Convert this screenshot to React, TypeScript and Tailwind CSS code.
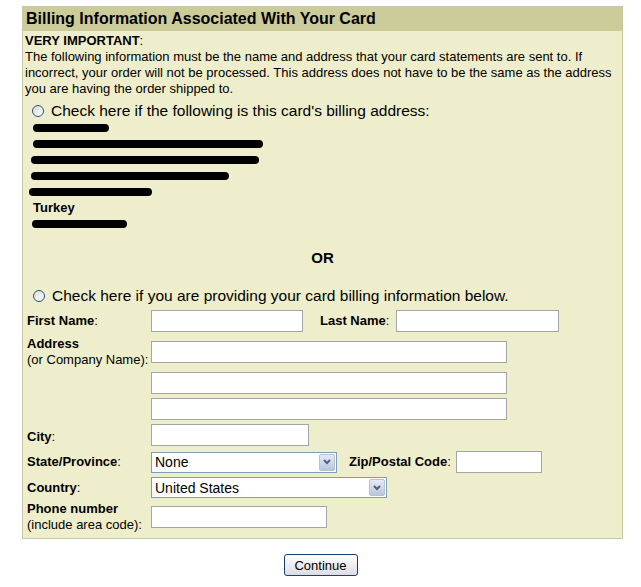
import React from "react";

function Radio() {
  return (
    <span className="inline-block w-[12px] h-[12px] rounded-full border border-[#2b5278] bg-gradient-to-br from-[#dcdcd4] to-white shrink-0" />
  );
}

function Input({ w }: { w: number }) {
  return (
    <div
      className="h-[22px] bg-white border border-[#a5a5a5] shrink-0"
      style={{ width: w }}
    />
  );
}

function Select({ w, value }: { w: number; value: string }) {
  return (
    <div
      className="h-[21px] bg-white border border-[#7f9db9] flex items-center justify-between shrink-0"
      style={{ width: w }}
    >
      <span className="pl-[3px] text-[14px] leading-none">{value}</span>
      <span className="w-[16px] h-[17px] mr-[1px] rounded-[2px] border border-[#b7c1cf] bg-gradient-to-b from-[#e6ebf5] to-[#b9c6dc] flex items-center justify-center">
        <svg width="8" height="6" viewBox="0 0 8 6">
          <path d="M1 1 L4 4 L7 1" stroke="#4d6185" strokeWidth="2" fill="none" />
        </svg>
      </span>
    </div>
  );
}

function Scribble({ w, ml = 0 }: { w: number; ml?: number }) {
  return (
    <div className="h-[16px] flex items-center">
      <div
        className="h-[8px] bg-black rounded-full"
        style={{ width: w, marginLeft: ml }}
      />
    </div>
  );
}

export default function App() {
  return (
    <div className="w-[641px] h-[587px] bg-white pt-[6px] font-['Liberation_Sans',Arial,sans-serif] text-black">
      <div className="ml-[22px] w-[601px] border border-[#c8c8a2] bg-[#eeeecd]">
        {/* header */}
        <div className="h-[24px] bg-[#cccc9a] pl-[3px] text-[16px] font-bold leading-[24px]">
          Billing Information Associated With Your Card
        </div>

        <div className="px-[2px] pt-[2px] text-[13px] leading-[16px]">
          <div>
            <b>VERY IMPORTANT</b>:
          </div>
          <p>
            The following information must be the name and address that your card statements are sent to. If
            incorrect, your order will not be processed. This address does not have to be the same as the address
            you are having the order shipped to.
          </p>
        </div>

        {/* option 1 */}
        <div className="flex items-center gap-[7px] pl-[9px] mt-[5px] h-[18px] text-[15.5px]">
          <Radio />
          <span>Check here if the following is this card's billing address:</span>
        </div>
        <div className="pl-[6px]">
          <Scribble w={76} ml={4} />
          <Scribble w={230} ml={4} />
          <Scribble w={228} ml={2} />
          <Scribble w={198} ml={2} />
          <Scribble w={123} />
          <div className="h-[16px] pl-[4px] text-[13px] font-bold leading-[16px]">Turkey</div>
          <Scribble w={95} ml={3} />
        </div>

        <div className="text-center text-[15px] font-bold mt-[16px] h-[20px] leading-[20px]">OR</div>

        {/* option 2 */}
        <div className="flex items-center gap-[7px] pl-[10px] mt-[19px] h-[18px] text-[15.5px]">
          <Radio />
          <span>Check here if you are providing your card billing information below.</span>
        </div>

        <div className="pl-[4px] pb-[5px] text-[13px] leading-[16px]">
          <div className="flex items-center mt-[5px]">
            <span className="w-[124px]"><b>First Name</b>:</span>
            <Input w={152} />
            <span className="ml-[17px] w-[76px]"><b>Last Name</b>:</span>
            <Input w={163} />
          </div>

          <div className="flex items-start mt-[9px]">
            <span className="w-[124px] -mt-[5px]">
              <b>Address</b>
              <br />
              (or Company Name):
            </span>
            <div className="flex flex-col">
              <Input w={356} />
              <div className="mt-[9px]">
                <Input w={356} />
              </div>
              <div className="mt-[4px]">
                <Input w={356} />
              </div>
            </div>
          </div>

          <div className="flex items-center mt-[4px]">
            <span className="w-[124px] pt-[4px]"><b>City</b>:</span>
            <Input w={158} />
          </div>

          <div className="flex items-center mt-[5px]">
            <span className="w-[124px]"><b>State/Province</b>:</span>
            <Select w={186} value="None" />
            <span className="ml-[12px] w-[107px]"><b>Zip/Postal Code</b>:</span>
            <Input w={86} />
          </div>

          <div className="flex items-center mt-[4px]">
            <span className="w-[124px]"><b>Country</b>:</span>
            <Select w={236} value="United States" />
          </div>

          <div className="flex items-center mt-[3px]">
            <span className="w-[124px]">
              <b>Phone number</b>
              <br />
              (include area code):
            </span>
            <Input w={176} />
          </div>
        </div>
      </div>

      <div className="flex justify-center mt-[15px]">
        <button className="w-[74px] h-[22px] rounded-[3px] border border-[#1c3f70] bg-gradient-to-b from-white to-[#dcdce4] text-[13px] leading-none">
          Continue
        </button>
      </div>
    </div>
  );
}
